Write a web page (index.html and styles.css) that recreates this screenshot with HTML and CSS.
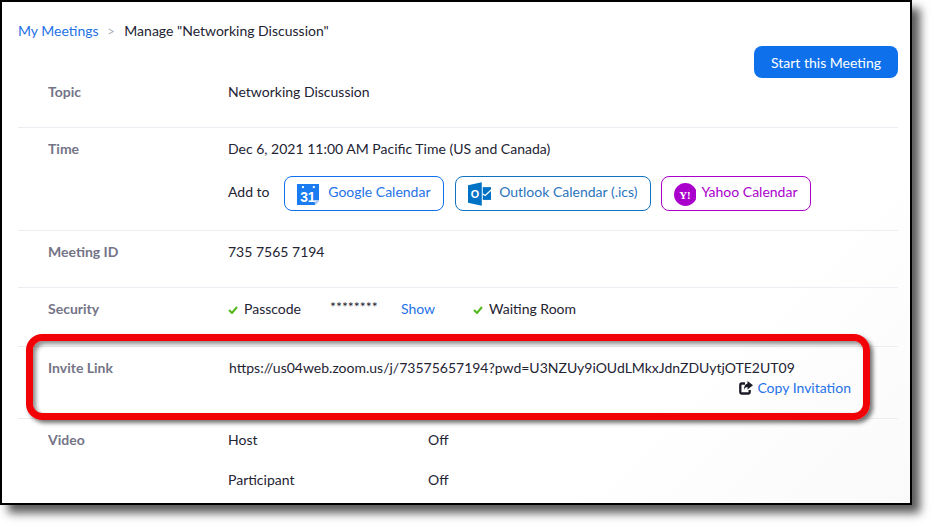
FILE: index.html
```html
<!DOCTYPE html>
<html lang="en">
<head>
  <meta charset="UTF-8">
  <title>Manage "Networking Discussion"</title>
  <link rel="stylesheet" href="styles.css">
</head>
<body>
  <div class="frame">
    <!-- Breadcrumb -->
    <div class="crumbs">
      <a class="link">My Meetings</a>
      <span class="crumb-sep">&gt;</span>
      <span>Manage "Networking Discussion"</span>
    </div>

    <div class="actions">
      <button class="start-btn">Start this Meeting</button>
    </div>

    <div class="row row-topic">
      <div class="label">Topic</div>
      <div class="value">Networking Discussion</div>
    </div>

    <div class="row row-time">
      <div class="label">Time</div>
      <div class="value">
        <div>Dec 6, 2021 11:00 AM Pacific Time (US and Canada)</div>
        <div class="add-to">
          <span class="add-label">Add to</span>
          <a class="cal-btn cal-google">
            <svg width="23" height="21" viewBox="0 0 23 21">
              <path d="M0 0h23v16l-5 5H0z" fill="#1a7cf0"/>
              <path d="M18 21v-5h5z" fill="#a9cdf8"/>
              <rect x="5" y="2" width="2" height="2" fill="#fff"/>
              <rect x="16" y="2" width="2" height="2" fill="#fff"/>
              <text x="11" y="18" class="g-num">31</text>
            </svg>
            Google Calendar
          </a>
          <a class="cal-btn cal-outlook">
            <svg width="24" height="24" viewBox="0 0 24 24">
              <path d="M0 3l14-3v24L0 21z" fill="#0072c6"/>
              <path d="M15 5h9v13h-9z" fill="#0072c6"/>
              <path d="M15 12l2.500 1.500L24 7.500" fill="none" stroke="#fff" stroke-width="1.300"/>
              <text x="7" y="16" class="o-letter">O</text>
            </svg>
            Outlook Calendar (.ics)
          </a>
          <a class="cal-btn cal-yahoo">
            <svg width="23" height="23" viewBox="0 0 23 23">
              <circle cx="11.500" cy="11.500" r="11.500" fill="#a0c"/>
              <text x="11" y="16" class="y-letter">Y!</text>
            </svg>
            Yahoo Calendar
          </a>
        </div>
      </div>
    </div>

    <div class="row">
      <div class="label">Meeting ID</div>
      <div class="value">735 7565 7194</div>
    </div>

    <div class="row row-security">
      <div class="label">Security</div>
      <div class="value security">
        <svg class="check" width="10" height="8" viewBox="0 0 10 8"><path d="M1 4l3 3 5-6" fill="none" stroke="#52b81a" stroke-width="2"/></svg>
        <span class="passcode">Passcode</span>
        <span class="stars">********</span>
        <a class="link show">Show</a>
        <svg class="check" width="10" height="8" viewBox="0 0 10 8"><path d="M1 4l3 3 5-6" fill="none" stroke="#52b81a" stroke-width="2"/></svg>
        <span>Waiting Room</span>
      </div>
    </div>

    <div class="row row-invite">
      <div class="label">Invite Link</div>
      <div class="value">
        <div class="url">https://us04web.zoom.us/j/73575657194?pwd=U3NZUy9iOUdLMkxJdnZDUytjOTE2UT09</div>
        <div class="copy">
          <svg width="14" height="14" viewBox="0 0 14 14">
            <path d="M6 2.500H2.500a1.200 1.200 0 0 0-1.200 1.200v7.600a1.200 1.200 0 0 0 1.200 1.200h7a1.200 1.200 0 0 0 1.200-1.200V9" fill="none" stroke="#1b1b28" stroke-width="2.300"/>
            <path d="M8.500 0L14 4.200 8.500 8.500V6C6.800 6 5.500 7 5 9 4.800 5.500 6.300 3 8.500 2.600z" fill="#1b1b28"/>
          </svg>
          <a class="link">Copy Invitation</a>
        </div>
      </div>
    </div>

    <div class="row row-video">
      <div class="label">Video</div>
      <div class="value video">
        <span>Host</span><span>Off</span>
        <span>Participant</span><span>Off</span>
      </div>
    </div>

    <!-- Red callout drawn over the screenshot -->
    <div class="callout"></div>
  </div>
</body>
</html>
```

FILE: styles.css
```css
* {
  margin: 0;
  padding: 0;
  box-sizing: border-box;
}
body {
  min-height: 100vh;
  font-family: 'Lato', sans-serif;
  font-size: 14px;
  line-height: 20px;
  color: #232333;
  background: #fff;
}
.frame {
  position: relative;
  width: 912px;
  height: 505px;
  padding: 19px 12px 0 18px;
  overflow: hidden;
  border: 2px solid #000;
  background: linear-gradient(135deg, #fff 75%, #fafafa);
  box-shadow: 8px 8px 9px rgba(0, 0, 0, 0.65);
}
.link {
  color: #2472e8;
  text-decoration: none;
}
.crumbs {
  margin-left: -2px;
}
.crumb-sep {
  margin: 0 6px 0 5px;
  color: #b0b0b8;
  font-size: 13px;
}
.actions {
  display: flex;
  justify-content: flex-end;
  margin-top: 5px;
  height: 32px;
}
.start-btn {
  width: 144px;
  height: 32px;
  border: 0;
  border-radius: 8px;
  background: #0e71eb;
  color: #fff;
  font: 14px 'Lato', sans-serif;
}
.row {
  display: grid;
  grid-template-columns: 180px 1fr;
  margin-left: -2px;
  padding: 11px 0 25px 30px;
  border-bottom: 1px solid #ededf4;
}
.label {
  color: #747487;
  font-weight: 700;
}
.row-topic {
  padding-top: 4px;
}
.row-time {
  padding-bottom: 19px;
}
.add-to {
  display: flex;
  align-items: center;
  gap: 11px;
  margin-top: 17px;
}
.add-label {
  margin: 0 3px 3px 0;
}
.cal-btn {
  display: flex;
  align-items: center;
  gap: 9px;
  height: 35px;
  padding: 0 12px 3px;
  border: 1px solid #0e71eb;
  border-radius: 8px;
  color: #2472e8;
  white-space: nowrap;
}
.cal-btn svg {
  margin-top: 4px;
}
.cal-google {
  width: 160px;
}
.cal-outlook {
  width: 196px;
  gap: 8px;
  border-color: #0f72c1;
  color: #2b74bd;
}
.cal-yahoo {
  width: 150px;
  margin-left: -1px;
  gap: 5px;
  border-color: #a0c;
  color: #a0c;
}
.g-num {
  fill: #fff;
  font: 700 14px 'Liberation Sans', sans-serif;
  text-anchor: middle;
}
.o-letter {
  fill: #fff;
  font: 700 11px 'Liberation Sans', sans-serif;
  text-anchor: middle;
}
.y-letter {
  fill: #fff;
  font: 700 11px 'Liberation Serif', serif;
  text-anchor: middle;
}
.row-security {
  padding-bottom: 27px;
}
.security {
  display: flex;
  align-items: center;
}
.check {
  margin-right: 6px;
  margin-top: 2px;
}
.passcode {
  width: 86px;
}
.stars {
  width: 71px;
  margin-top: -5px;
}
.show {
  width: 72px;
}
.row-invite {
  padding-bottom: 20px;
}
.url {
  padding-left: 1px;
}
.copy {
  display: flex;
  justify-content: flex-end;
  align-items: center;
  gap: 4px;
  padding-right: 47px;
}
.row-video {
  border-bottom: 0;
}
.video {
  display: grid;
  grid-template-columns: 200px 1fr;
  row-gap: 20px;
}
.callout {
  position: absolute;
  left: 24px;
  top: 332px;
  width: 844px;
  height: 86px;
  border: 7.500px solid #f00206;
  border-radius: 16px;
  box-shadow: 3px 3px 4px rgba(0, 0, 0, 0.55), inset 3px 3px 4px rgba(0, 0, 0, 0.45);
}
```
